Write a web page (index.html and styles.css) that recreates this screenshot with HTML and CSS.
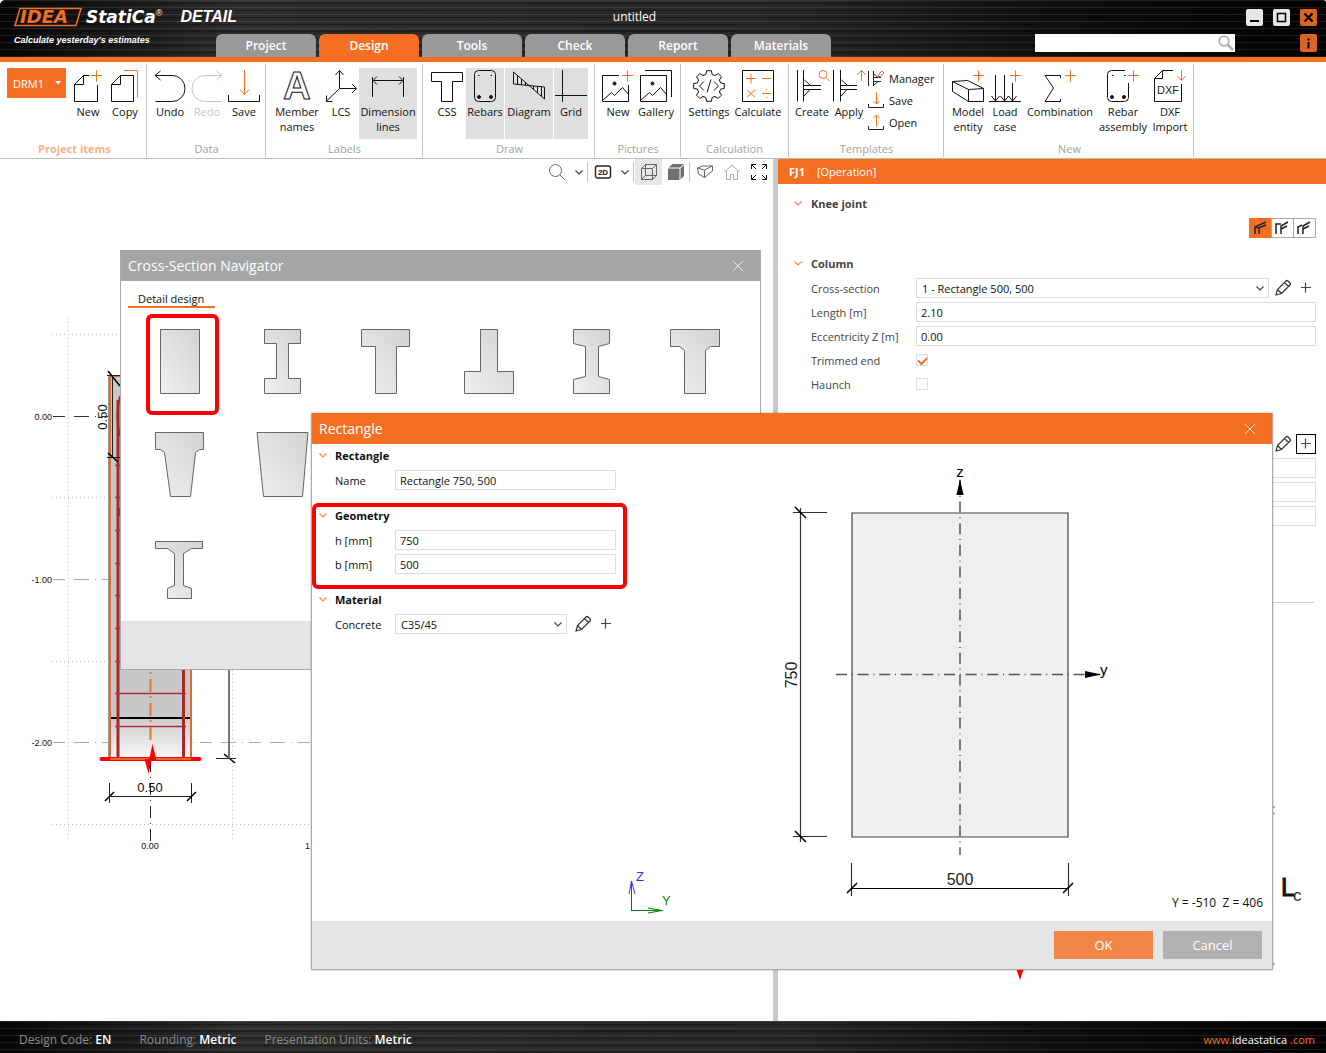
FILE: index.html
```html
<!DOCTYPE html>
<html lang="en">
<head>
<meta charset="utf-8">
<title>IDEA StatiCa Detail - untitled</title>
<link rel="stylesheet" href="styles.css">
</head>
<body>
<svg class="defs" width="0" height="0" aria-hidden="true">
  <defs>
    <linearGradient id="metal" x1="0" y1="1" x2="1" y2="0"><stop offset="0" stop-color="#f0f0f0"/><stop offset="1" stop-color="#d2d2d2"/></linearGradient>
    <symbol id="chev" viewBox="0 0 10 10"><path d="M1.500 3.500L5 7l3.500-3.500" fill="none" stroke="currentColor" stroke-width="1.200"/></symbol>
    <symbol id="pencil" viewBox="0 0 18 18"><path d="M2 16l1.500-5.500L12 2q1-1 2 0l2 2q1 1 0 2L7.500 14.500zM10.500 3.500l4 4M3.500 10.500l4 4" fill="none" stroke="#333" stroke-width="1.200"/></symbol>
    <symbol id="plus" viewBox="0 0 20 20"><path d="M5 9.500h10M9.500 4.500v10" fill="none" stroke="#444" stroke-width="1.200"/></symbol>
    <symbol id="cross" viewBox="0 0 12 12"><path d="M1 1l10 10M11 1L1 11" fill="none" stroke="#fff" stroke-opacity=".8"/></symbol>
  </defs>
</svg>

<div class="app">
  <header class="top">
    <div class="brand">
      <div class="brand-row">
        <svg class="logo" width="68" height="20" role="img" aria-label="IDEA">
          <path d="M6 1.500H67L62 18.500H1z" fill="none" stroke="#f36f21" stroke-width="1.500"/>
          <text x="6" y="16" class="logo-text">IDEA</text>
        </svg>
        <span class="statica">StatiCa<sup>®</sup></span>
        <span class="detail">DETAIL</span>
      </div>
      <p class="tagline">Calculate yesterday's estimates</p>
    </div>
    <div class="top-mid">
      <div class="doc-title">untitled</div>
      <nav class="tabs">
        <button>Project</button><button class="on">Design</button><button>Tools</button><button>Check</button><button>Report</button><button>Materials</button>
      </nav>
    </div>
    <div class="top-right">
      <div class="win">
        <button aria-label="Minimize"><svg width="17" height="17"><path d="M4 12h9" stroke="#000" stroke-width="2"/></svg></button>
        <button aria-label="Maximize"><svg width="17" height="17"><path d="M4.500 4.500h8v8h-8z" fill="none" stroke="#000" stroke-width="1.500"/></svg></button>
        <button class="hot" aria-label="Close"><svg width="17" height="17"><path d="M4.500 4.500l8 8M12.500 4.500l-8 8" stroke="#000" stroke-width="2.200"/></svg></button>
      </div>
      <div class="find">
        <label class="search"><input type="text" aria-label="Search"><svg width="18" height="18"><circle cx="7" cy="7" r="4.800" fill="none" stroke="#b0b0b0" stroke-width="1.800"/><path d="M10.500 10.500l5.500 5.500" stroke="#b0b0b0" stroke-width="2.500"/></svg></label>
        <div class="win"><button class="hot" aria-label="Info"><svg width="17" height="17"><path d="M8.500 7v6.500M8.500 3.500v2" stroke="#000" stroke-width="2"/></svg></button></div>
      </div>
    </div>
  </header>

  <section class="ribbon">
    <div class="grp g-items">
      <div class="tools">
        <label class="drm"><select aria-label="Project item"><option>DRM1</option></select><svg width="7" height="4"><path d="M0 0h6L3 3.500z" fill="#fff"/></svg></label>
        <button class="w36"><svg class="ic"><path d="M2.500 31.500v-17L11.500 5.500h6M2.500 14.500h9v-9M25.500 15v16.500h-23"/><path class="o" d="M24.500 .5v11M19 5.500h11"/></svg>New</button>
        <button class="w36"><svg class="ic"><path d="M2.500 31.500v-17L11.500 5.500h13v26zM2.500 14.500h9v-9"/><path class="o" d="M15 .5h13.500v27"/></svg>Copy</button>
      </div>
      <h2 class="hl">Project items</h2>
    </div>
    <div class="grp g-data">
      <div class="tools">
        <button class="w36"><svg class="ic"><path d="M1 5.500h17.500a12.500 13 0 0 1 0 26H1.500M6.500 1L1 5.500 6.500 10"/></svg>Undo</button>
        <button class="w36 off" disabled><svg class="ic"><path d="M31 5.500H13.500a12.500 13 0 0 0 0 26H30.500M25.500 1L31 5.500 25.500 10"/></svg>Redo</button>
        <button class="w36"><svg class="ic"><path d="M.5 25v6.500h31V25"/><path class="o" d="M16.500 0v24M12 19.500l4.500 5 4.500-5"/></svg>Save</button>
      </div>
      <h2>Data</h2>
    </div>
    <div class="grp g-labels">
      <div class="tools">
        <button class="w52"><svg class="ic"><text x="16" y="29" text-anchor="middle" class="ic-a">A</text></svg>Member names</button>
        <button class="w34"><svg class="ic"><path d="M14.500 1v17.500L1 31.500M14.500 18.500H31M10.500 5l4-4.500 4 4.500M27 14l4.500 4.500L27 23M1.500 25.500v6h6"/></svg>LCS</button>
        <button class="w58 on"><svg class="ic"><path d="M.5 7v20M31.500 7v20M1 10.500h30M5 6.500L1 10.500l4 4M27 6.500l4 4-4 4"/></svg>Dimension lines</button>
      </div>
      <h2>Labels</h2>
    </div>
    <div class="grp g-draw">
      <div class="tools">
        <button class="w36"><svg class="ic"><path d="M.5 2.500h31v9H21.500v20h-11v-20H.5z"/></svg>CSS</button>
        <button class="w38 on"><svg class="ic"><rect x="5.500" y=".5" width="21" height="31" rx="4"/><path d="M9 5.500h1.500M21.500 5.500h1.500"/><g class="dot"><circle cx="10" cy="27" r="1.500"/><circle cx="22" cy="27" r="1.500"/></g></svg>Rebars</button>
        <button class="w48 on"><svg class="ic"><path d="M.5 2v12l31 3v12zM4.500 5v9.500M8.500 9v6M12.500 12v3.500M20.500 16v4M24.500 16.500v6.500M28.500 17v9.500"/></svg>Diagram</button>
        <button class="w34 on"><svg class="ic"><path d="M7.500 0v32M0 25.500h32"/></svg>Grid</button>
      </div>
      <h2>Draw</h2>
    </div>
    <div class="grp g-pics">
      <div class="tools">
        <button class="w36"><svg class="ic"><path d="M17 5.500H.5v26h26V15M.5 30.500l9-8 3 3 8-8 6 7"/><circle class="dot" cx="12.500" cy="13.500" r="1.500"/><path class="o" d="M25.500 .5v11M20 5.500h11"/></svg>New</button>
        <button class="w38"><svg class="ic"><path d="M.5 5.500h26v26H.5zM.5 30.500l9-8 3 3 8-8 6 7M5 .5h26.500V27"/><circle class="dot" cx="12.500" cy="13.500" r="1.500"/></svg>Gallery</button>
      </div>
      <h2>Pictures</h2>
    </div>
    <div class="grp g-calc">
      <div class="tools">
        <button class="w48"><svg class="ic"><path stroke-linejoin="round" d="M27.600 12.900L31.300 13.600V18.400L27.600 19.100 26.400 22 28.500 25.100 25.100 28.500 22 26.400 19.100 27.600 18.400 31.300H13.600L12.900 27.600 10 26.400 6.900 28.500 3.500 25.100 5.600 22 4.400 19.100 .7 18.400V13.600L4.400 12.900 5.600 10 3.500 6.900 6.900 3.500 10 5.600 12.900 4.400 13.600 .7H18.400L19.100 4.400 22 5.600 25.100 3.500 28.500 6.900 26.400 10zM11 11.500L6.500 16 11 20.500M21 11.500l4.500 4.500-4.500 4.500M18 9.500l-4 13"/></svg>Settings</button>
        <button class="w48"><svg class="ic"><path d="M.5 .5h31v31H.5z"/><path class="o" d="M4 8.500h10M9 3.500v10M20 8.500h9M5 20l8 7M13 20l-8 7M20 23.500h9M24 19.500h1M24 27.500h1"/></svg>Calculate</button>
      </div>
      <h2>Calculation</h2>
    </div>
    <div class="grp g-templ">
      <div class="tools">
        <button class="w36"><svg class="ic"><path d="M1.500 0v31.500M7.500 0v31.500M8 15.500h17M8 19.500h17M8.500 10l6 5.500M8 26l6-6.500"/><circle class="o" cx="27" cy="4.500" r="4"/><path class="o" d="M30 7.500l3.500 3.500"/></svg>Create</button>
        <button class="w36"><svg class="ic"><path d="M.5 0v31.500M7.500 0v31.500M8 15.500h16M8 19.500h16M8.500 10l6 5.500M8 26l6-6.500"/><path class="o" d="M28.500 11V.5M24 5l4.500-4.500L33 5"/></svg>Apply</button>
        <div class="stack">
          <button><svg class="sm"><path d="M.5 1v15M5.500 1v15M6 7.500h7M6 11.500h7M6 4l4 3.500M6 15l4-3.500"/><path class="o" d="M10 7l1-3 3-3 2 2-3 3z"/></svg>Manager</button>
          <button><svg class="sm"><path d="M.5 12v3.500h15V12"/><path class="o" d="M8.500 0v12M5.500 9l3 3 3-3"/></svg>Save</button>
          <button><svg class="sm"><path d="M.5 12v3.500h15V12"/><path class="o" d="M8.500 12.500V1M5.500 4l3-3 3 3"/></svg>Open</button>
        </div>
      </div>
      <h2>Templates</h2>
    </div>
    <div class="grp g-new">
      <div class="tools">
        <button class="w36"><svg class="ic"><path d="M.5 11.500l16 8v12l-16-10zM.5 11.500l15-1 16 8-15 1M31.500 18.500v13h-15"/><path class="o" d="M26.500 .5v11M21 5.500h11"/></svg>Model entity</button>
        <button class="w36"><svg class="ic"><path d="M0 31.500h32M6.500 5v26M15.500 5v26M23.500 13v18M2.500 26l4 5 4-5M11.500 26l4 5 4-5M19.500 26l4 5 4-5"/><path class="o" d="M26.500 .5v11M21 5.500h11"/></svg>Load case</button>
        <button class="w72"><svg class="ic"><path d="M16.500 8V5.500H1l8.500 12.500L1 31.500h15.500V29"/><path class="o" d="M26.500 .5v11M21 5.500h11"/></svg>Combination</button>
        <button class="w52"><svg class="ic"><path d="M18 .5H4.500q-4 0-4 4v23q0 4 4 4h13q4 0 4-4V13M5 5.500h1.500M17 5.500h1.500"/><g class="dot"><circle cx="5" cy="27" r="1.500"/><circle cx="17" cy="27" r="1.500"/></g><path class="o" d="M26.500 .5v11M21 5.500h11"/></svg>Rebar assembly</button>
        <button class="w40"><svg class="ic"><path d="M19 .5H8.500L.5 8.500v23h27V14M.5 8.500h8v-8"/><text class="ic-dxf" x="3" y="24">DXF</text><path class="o" d="M27.500 0v10M23.500 6l4 4.500 4-4.500"/></svg>DXF Import</button>
      </div>
      <h2>New</h2>
    </div>
  </section>

  <main class="work">
    <section class="view">
      <div class="viewbar">
        <button aria-label="Zoom"><svg width="18" height="18"><circle cx="7.500" cy="7.500" r="6"/><path d="M12 12l5 5"/></svg></button>
        <button class="tiny" aria-label="Zoom options"><svg width="10" height="10"><use href="#chev"/></svg></button>
        <i class="sep"></i>
        <button aria-label="2D view"><svg width="18" height="18"><rect x="1.500" y="3" width="15" height="12" rx="2" stroke="#222" stroke-width="1.400"/><text x="9" y="12" text-anchor="middle" class="ic-2d">2D</text></svg></button>
        <button class="tiny" aria-label="View options"><svg width="10" height="10"><use href="#chev"/></svg></button>
        <i class="sep"></i>
        <button class="on" aria-label="Wireframe"><svg width="18" height="18"><path d="M1.500 5.500h11v11h-11zM5.500 1.500h11v11h-11zM1.500 5.500l4-4M12.500 5.500l4-4M1.500 16.500l4-4M12.500 16.500l4-4"/></svg></button>
        <button aria-label="Solid"><svg width="18" height="18"><path d="M1 5.500h11.500V17H1zM1.500 4.500l4-3.500H17l-4 3.500zM13.500 5.500L17 2v11l-3.500 3.500z" fill="#707070" stroke="none"/></svg></button>
        <i class="sep"></i>
        <button aria-label="Perspective"><svg width="18" height="18"><path d="M1.500 5l5-2h10v5l-8 6.500-6-3.500zM1.500 5l7 2v7.500M8.500 7l8-4"/></svg></button>
        <button class="soft" aria-label="Home view"><svg width="18" height="18"><path d="M1.500 9L9 2l7.500 7M3.500 8v8.500h4v-5h3v5h4V8"/></svg></button>
        <button aria-label="Full screen"><svg width="18" height="18" class="blk"><path d="M6 1.500H1.500V6M2 2l4 4M12 1.500h4.500V6M16 2l-4 4M6 16.500H1.500V12M2 16l4-4M12 16.500h4.500V12M16 16l-4-4"/></svg></button>
      </div>
      <svg class="model" role="img" aria-label="Column model">
        <defs><linearGradient id="fade" x1="0" y1="0" x2="0" y2="1"><stop offset="0" stop-color="#ccc"/><stop offset="1" stop-color="#f8f8f8"/></linearGradient></defs>
        <g transform="translate(0 -185)" fill="none">
          <path d="M68.500 318v524M232.500 318v524M52 334.500h260M52 497.500h260M52 661.500h260M52 824.500h260" stroke="#bbb" stroke-dasharray="1 3"/>
          <path d="M53 416.500h58" stroke="#333" stroke-dasharray="12 9 15 6 1 6"/>
          <path d="M53 579.500h58M53 742.500h259" stroke="#aaa" stroke-dasharray="12 9 15 6 1 6"/>
          <path d="M109 376h83v342h-83z" fill="#c8c8c8"/><path d="M109 718h83v41h-83z" fill="url(#fade)"/>
          <path d="M110 718h82" stroke="#000" stroke-width="2"/>
          <path d="M118 400v358M183.500 400v358" stroke="#a32a2a" stroke-width="3"/>
          <path d="M120 396q-5 20 0 40M120 508v8" stroke="#a32a2a" stroke-width="2"/>
          <path d="M115 693.500h71M115 726.500h71M115 465.500h6M115 497.500h6M115 530.500h6M115 563.500h6M115 595.500h6M115 628.500h6M115 661.500h6" stroke="#b0303a" stroke-width="1.500"/>
          <path d="M110 376v383M191 376v383M110 376h81" stroke="#e06a2b" stroke-width="2"/><path d="M108.500 376v383" stroke="#999"/>
          <path d="M150.500 672v68" stroke="#f37021" stroke-width="2" stroke-dasharray="2 5 13 4"/>
          <path d="M150.500 760v82" stroke="#222" stroke-dasharray="12 5 1 5"/>
          <path d="M101.500 759h98" stroke="#f00" stroke-width="4" stroke-linecap="round"/>
          <path d="M110 759h81" stroke="#e06a2b" stroke-width="2"/>
          <path d="M149 760l3.500-16 4 16zM144.500 759h7.500l-3.500 15z" fill="#f00"/>
          <path d="M109.500 783v20M191.500 783v20M109 796.500h83M112.500 376v82M107 375.500h14M107 457.500h14" stroke="#222"/>
          <path d="M105 801l9-9M187 801l9-9M108 371l12 15M108 453l10 9M224 754l11 9" stroke="#000" stroke-width="1.500"/>
          <path d="M229 670v88" stroke="#777" stroke-width="2"/><path d="M216 758.500h20" stroke="#222"/>
          <g class="axis"><text x="52" y="420" text-anchor="end">0.00</text><text x="52" y="583" text-anchor="end">-1.00</text><text x="52" y="746" text-anchor="end">-2.00</text><text x="150" y="849" text-anchor="middle">0.00</text><text x="305" y="849">1</text></g>
          <g class="dimtxt"><text x="150" y="792" text-anchor="middle">0.50</text><text transform="translate(107 417) rotate(-90)" text-anchor="middle">0.50</text></g>
        </g>
      </svg>
    </section>
    <div class="splitter"></div>
    <aside class="props">
      <h2 class="props-head"><b>FJ1</b><span>[Operation]</span></h2>
      <div class="props-body">
        <h3><svg width="10" height="10"><use href="#chev"/></svg>Knee joint</h3>
        <div class="kinds">
          <button class="on" aria-label="Joint type 1"><svg width="20" height="18"><path d="M5 15V8l11-5M9 15V9M5 8l4 1 7-3"/></svg></button>
          <button aria-label="Joint type 2"><svg width="20" height="18"><path d="M4 15V5h5M9 15V7l7-4M9 10l6-3"/></svg></button>
          <button aria-label="Joint type 3"><svg width="20" height="18"><path d="M4 15V8l4-2M9 15V7l7-4M9 10l6-3"/></svg></button>
        </div>
        <h3><svg width="10" height="10"><use href="#chev"/></svg>Column</h3>
        <div class="row"><label for="cs">Cross-section</label><span class="combo"><select id="cs"><option>1 - Rectangle 500, 500</option></select><svg width="10" height="10"><use href="#chev"/></svg></span>
          <span class="acts"><button aria-label="Edit"><svg width="18" height="18"><use href="#pencil"/></svg></button><button aria-label="Add"><svg width="20" height="20"><use href="#plus"/></svg></button></span></div>
        <div class="row"><label for="len">Length [m]</label><input id="len" class="wide" type="text" value="2.10"></div>
        <div class="row"><label for="ecc">Eccentricity Z [m]</label><input id="ecc" class="wide" type="text" value="0.00"></div>
        <div class="row"><label for="trim">Trimmed end</label><input id="trim" type="checkbox" checked></div>
        <div class="row"><label for="haunch">Haunch</label><input id="haunch" type="checkbox"></div>
        <div class="beam">
          <div class="row"><span></span><span class="combo"><select aria-label="Cross-section"></select></span>
            <span class="acts"><button aria-label="Edit"><svg width="18" height="18"><use href="#pencil"/></svg></button><button class="boxed" aria-label="Add"><svg width="20" height="20"><use href="#plus"/></svg></button></span></div>
          <div class="row"><span></span><input class="wide" type="text" aria-label="Length"></div>
          <div class="row"><span></span><input class="wide" type="text" aria-label="Eccentricity"></div>
          <div class="row"><span></span><input class="wide" type="text" aria-label="Rotation"></div>
        </div>
      </div>
      <svg class="sketch" role="img" aria-label="Joint sketch">
        <path d="M494 204h3M494 361h3M494 209l3 2" stroke="#777"/>
        <path d="M238 365h8l-4 12z" fill="#f00"/>
        <text x="503" y="293" class="lc">L</text><text x="515" y="298" class="lc-sub">c</text>
      </svg>
    </aside>

    <section class="navigator" aria-label="Cross-Section Navigator">
      <header class="dlg-head">Cross-Section Navigator<button aria-label="Close"><svg width="12" height="12"><use href="#cross"/></svg></button></header>
      <div class="nav-body">
        <button class="nav-tab">Detail design</button>
        <div class="shapes">
          <button aria-label="Rectangle"><svg><path d="M32.500 19.500h39v64h-39z"/></svg></button>
          <button aria-label="I section"><svg><path d="M33.500 19.500h36v14h-12v35h12v15h-36v-15h12v-35h-12z"/></svg></button>
          <button aria-label="T section"><svg><path d="M27.500 19.500h48v17H62.500v47h-21v-47h-14z"/></svg></button>
          <button aria-label="Inverted T section"><svg><path d="M43.500 19.500h17v42h16v22h-49v-22h16z"/></svg></button>
          <button aria-label="Haunched I section"><svg><path d="M33.500 19.500h36v14l-11 3v30l11 3v14h-36v-14l12-3v-30l-12-3z"/></svg></button>
          <button aria-label="Haunched T section"><svg><path d="M27.500 19.500h49v17h-9l-5 4v43h-21v-43l-5-4h-9z"/></svg></button>
          <button aria-label="Tapered T section"><svg><path d="M27.500 19.500h48v17h-4l-4 3-5 44h-20l-6-44-4-3h-5z"/></svg></button>
          <button aria-label="Trapezoid"><svg><path d="M26 19.500h51l-5.500 64h-39z"/></svg></button>
          <span></span><span></span><span></span><span></span>
          <button aria-label="Asymmetric I section"><svg><path d="M27.500 25.500h47v7h-11l-8 5v32l8 3v10h-24v-10l7-3v-32l-7-5h-12z"/></svg></button>
        </div>
      </div>
      <footer class="nav-foot"></footer>
      <i class="mark mark-shape"></i>
    </section>

    <section class="dialog" aria-label="Rectangle">
      <header class="dlg-head">Rectangle<button aria-label="Close"><svg width="12" height="12"><use href="#cross"/></svg></button></header>
      <div class="dlg-main">
        <form class="dlg-form">
          <h3><svg width="10" height="10"><use href="#chev"/></svg>Rectangle</h3>
          <div class="row"><label for="nm">Name</label><input id="nm" class="wide" type="text" value="Rectangle 750, 500"></div>
          <h3><svg width="10" height="10"><use href="#chev"/></svg>Geometry</h3>
          <div class="row"><label for="gh">h [mm]</label><input id="gh" class="wide" type="text" value="750"></div>
          <div class="row"><label for="gb">b [mm]</label><input id="gb" class="wide" type="text" value="500"></div>
          <h3><svg width="10" height="10"><use href="#chev"/></svg>Material</h3>
          <div class="row"><label for="mat">Concrete</label><span class="combo"><select id="mat"><option>C35/45</option></select><svg width="10" height="10"><use href="#chev"/></svg></span>
            <span class="acts"><button type="button" aria-label="Edit"><svg width="18" height="18"><use href="#pencil"/></svg></button><button type="button" aria-label="Add"><svg width="20" height="20"><use href="#plus"/></svg></button></span></div>
        </form>
        <svg class="section-view" role="img" aria-label="Section with dimensions">
          <g transform="translate(-627 -444)" fill="none" stroke="#333">
            <path d="M852 513h216v324H852z" fill="#efefef" stroke="#444" stroke-width="1.200"/>
            <path d="M960 480v375M836 674.500h264" stroke="#555" stroke-width="1.500" stroke-dasharray="11 4.800 1 4.800"/>
            <path d="M960 479l-3.500 16h7zM1101 674.500l-16-3.500v7z" fill="#000" stroke="none"/>
            <path d="M800.500 508v334M793 512.500h34M793 836.500h34M851.500 863v33M1068.500 863v33" stroke-width="1.200"/>
            <path d="M851 888.500h218" stroke="#000"/>
            <path d="M795 507l11 11M795 831l11 11M847 893l10-10M1063 893l10-10" stroke="#000" stroke-width="1.500"/>
            <path d="M631.500 911v-30M629 894l2.500-13 3.500 13" stroke="#33e"/>
            <path d="M631 910.500h32M648 908l14 2.500-14 2.500" stroke="#080"/>
          </g>
          <g transform="translate(-627 -444)">
            <g class="axtxt"><text x="960" y="477" text-anchor="middle">z</text><text x="1100" y="675">y</text></g>
            <g class="bigdim"><text x="960" y="885" text-anchor="middle">500</text><text transform="translate(797 675) rotate(-90)" text-anchor="middle">750</text></g>
            <g class="ucs"><text x="636" y="881" fill="#33e">Z</text><text x="662" y="905" fill="#080">Y</text></g>
            <text class="pos" x="1263" y="907" text-anchor="end" xml:space="preserve">Y = -510  Z = 406</text>
          </g>
        </svg>
      </div>
      <footer class="dlg-foot"><button class="ok">OK</button><button>Cancel</button></footer>
      <i class="mark mark-geo"></i>
    </section>
  </main>

  <footer class="status">
    <span>Design Code: <b>EN</b></span><span>Rounding: <b>Metric</b></span><span>Presentation Units: <b>Metric</b></span>
    <a href="#">www.<em>ideastatica</em> .com</a>
  </footer>
</div>
</body>
</html>
```
FILE: styles.css
```css
:root {
  --orange: #f46f22;
  --metal:
    repeating-linear-gradient(180deg, rgba(255,255,255,.09) 0 1px, transparent 1px 3px, rgba(0,0,0,.35) 3px 4px, transparent 4px 7px),
    linear-gradient(90deg, #060606 0, #2c2c2c 18%, #262626 60%, #101010 78%, #020202 100%);
}
* { box-sizing: border-box; }
body { margin: 0; background: #fff; font: 11px/15px "Open Sans", "Noto Sans", sans-serif; color: #111; }
button, input, select { font: inherit; color: inherit; margin: 0; padding: 0; border: 0; background: none; border-radius: 0; }
h2, h3, p { margin: 0; font-size: 11px; }
svg { display: block; flex: none; }
.defs { position: absolute; }
.app { display: flex; flex-direction: column; min-height: 100vh; }

/* title bar */
.top { display: grid; grid-template-columns: 216px 1fr 291px; height: 62px; background: var(--metal); border-bottom: 5px solid var(--orange); border-top-left-radius: 5px; border-top-right-radius: 3px; }
.brand { padding: 7px 0 0 14px; color: #fff; white-space: nowrap; }
.brand-row { display: flex; align-items: center; height: 20px; gap: 4px; }
.logo { overflow: visible; }
.logo-text { font: italic bold 18px "DejaVu Sans", sans-serif; fill: var(--orange); }
.statica { font: italic bold 17px/20px "DejaVu Sans", sans-serif; }
.statica sup { font: 9px/8px "Liberation Sans", sans-serif; vertical-align: 7px; }
.detail { font: italic bold 16px/20px "Liberation Sans", sans-serif; padding-left: 14px; }
.tagline { font: italic bold 9px/12px "Liberation Sans", sans-serif; padding-top: 7px; }
.top-mid { display: flex; flex-direction: column; justify-content: space-between; }
.doc-title { color: #fff; font-size: 12px; line-height: 34px; text-align: center; padding-left: 18px; }
.tabs { display: flex; gap: 3px; }
.tabs button { width: 100px; height: 23px; border-radius: 6px 6px 0 0; background: #999; color: #fff; font-weight: 600; font-size: 12px; }
.tabs .on { background: var(--orange); }
.top-right { display: flex; flex-direction: column; padding: 9px 9px 0 0; gap: 8px; }
.win { display: flex; justify-content: flex-end; gap: 10px; }
.win button { background: #e6e6e6; border-radius: 2px; }
.win .hot { background: #dd6320; }
.find { display: flex; justify-content: space-between; }
.search { display: grid; width: 200px; height: 18px; background: #fff; }
.search > * { grid-area: 1 / 1; }
.search input { width: 100%; }
.search svg { justify-self: end; }

/* ribbon */
.ribbon { display: flex; height: 97px; border-bottom: 1px solid #bbb; padding-top: 2px; overflow: hidden; }
.grp { display: flex; flex-direction: column; justify-content: space-between; border-right: 1px solid #c4c4c4; padding: 4px 0 0 5px; height: 93px; flex: none; }
.grp h2 { font-weight: 400; color: #a2a2a2; text-align: center; line-height: 16px; padding-right: 4px; }
.grp .hl { color: #f8b28a; font-weight: 700; }
.g-items { width: 147px; padding-left: 7px; }
.g-data { width: 119px; }
.g-labels { width: 157px; }
.g-draw { width: 172px; padding-left: 6px; }
.g-pics { width: 86px; }
.g-calc { width: 108px; padding-left: 4px; }
.g-templ { width: 155px; }
.g-new { width: 250px; padding-left: 6px; }
.tools { display: flex; gap: 1px; align-items: flex-start; height: 72px; }
.tools button { display: flex; flex-direction: column; align-items: center; gap: 2px; height: 71px; padding-top: 2px; line-height: 15px; text-align: center; flex: none; }
.tools button.on { background: #dfdfdf; }
.tools button.off { color: #c4c4c4; }
.w34 { width: 34px; }
.w36 { width: 36px; }
.w38 { width: 38px; }
.w40 { width: 40px; }
.w48 { width: 48px; }
.w52 { width: 52px; }
.w58 { width: 58px; }
.w72 { width: 72px; }
.ic { width: 32px; height: 32px; overflow: visible; fill: none; stroke: currentColor; }
.sm { width: 16px; height: 17px; overflow: visible; fill: none; stroke: #222; }
.o { stroke: var(--orange); }
.dot { fill: #111; }
.ic-a { font: bold 38px "Liberation Sans", sans-serif; }
.ic-dxf { font: 11px "Liberation Sans", sans-serif; fill: #222; stroke: none; }
.drm { display: grid; width: 59px; height: 30px; margin-right: 3px; background: var(--orange); color: #fff; flex: none; }
.drm > * { grid-area: 1 / 1; }
.drm select { appearance: none; padding: 0 0 0 6px; width: 100%; color: #fff; }
.drm svg { place-self: center end; margin-right: 4px; }
.stack { display: flex; flex-direction: column; width: 72px; gap: 5px; padding-top: 2px; }
.tools .stack button { flex-direction: row; height: 17px; gap: 5px; padding: 0; }

/* workspace */
.work { flex: 1; position: relative; display: grid; grid-template-columns: minmax(0, 773fr) 5px minmax(0, 548fr); }
.view { display: flex; flex-direction: column; }
.viewbar { display: flex; justify-content: flex-end; align-items: center; height: 26px; padding-right: 1px; }
.viewbar button { display: grid; place-items: center; width: 27px; height: 26px; }
.viewbar .tiny { width: 17px; color: #444; }
.viewbar svg { fill: none; stroke: #666; stroke-width: 1; }
.viewbar .soft svg { stroke: #aaa; }
.viewbar .blk { stroke: #111; }
.viewbar .on { background: #e6e6e6; }
.sep { width: 1px; height: 20px; margin-right: 1px; background: #c4c4c4; }
.ic-2d { font: bold 8px "Liberation Sans", sans-serif; fill: #111; stroke: none; }
.model, .sketch { flex: 1; width: 100%; min-height: 0; }
.axis { font: 9px "Liberation Sans", sans-serif; fill: #111; }
.dimtxt { font: 13px "Liberation Sans", sans-serif; fill: #111; }
.splitter { background: #c8c8c8; }

/* property panel */
.props { display: flex; flex-direction: column; }
.props-head { display: flex; gap: 12px; align-items: center; height: 25px; padding-left: 11px; background: var(--orange); color: #fff; font-weight: 400; }
.props-body { padding: 8px 10px 0 15px; color: #444; }
h3 { display: flex; align-items: center; gap: 8px; height: 24px; padding-bottom: 2px; font-weight: 700; }
h3 svg { color: #f58748; }
.kinds { display: flex; justify-content: flex-end; padding: 2px 0 14px; }
.kinds button { border: 1px solid #aaa; margin-left: -1px; width: 23px; }
.kinds .on { background: var(--orange); border-color: var(--orange); }
.kinds svg { fill: none; stroke: #222; stroke-width: 1.5; }
.row { display: grid; grid-template-columns: 105px 1fr auto; align-items: center; height: 24px; padding-left: 18px; }
.row .wide { grid-column: 2 / -1; height: 20px; width: 100%; border: 1px solid #ddd; padding: 0 4px; color: #111; background: #fff; }
.combo { display: grid; }
.combo > * { grid-area: 1 / 1; }
.combo select { appearance: none; height: 20px; width: 100%; border: 1px solid #ddd; padding: 0 5px; color: #111; background: #fff; }
.combo svg { place-self: center end; margin-right: 4px; color: #444; }
.acts { display: flex; align-items: center; gap: 4px; padding-left: 5px; }
.boxed { outline: 1px solid #000; outline-offset: -1px; }
input[type="checkbox"] { appearance: none; width: 12px; height: 12px; border: 1px solid #ddd; display: grid; justify-items: center; padding-top: 2px; }
input[type="checkbox"]:checked::before { content: ""; width: 7px; height: 4px; border: solid var(--orange); border-width: 0 0 2px 2px; transform: rotate(-45deg); }
.beam { margin-top: 36px; }
.beam::after { content: ""; display: block; margin: 74px 2px 0 0; border-top: 1px solid #ccc; }
.lc { font: 25px "Liberation Sans", sans-serif; fill: #111; stroke: #111; }
.lc-sub { font: 17px "Liberation Sans", sans-serif; fill: #333; }

/* windows */
.dlg-head { display: flex; align-items: center; justify-content: space-between; height: 31px; padding: 0 16px 0 7px; font-size: 14px; color: #fff; }
.navigator { position: absolute; left: 120px; top: 91px; width: 641px; background: #fff; border: 1px solid #aaa; border-top: 0; }
.navigator .dlg-head { background: #a5a5a5; }
.nav-body { padding: 9px 7px 0; height: 340px; }
.nav-tab { display: block; height: 18px; padding: 0 11px 0 10px; border-bottom: 2px solid var(--orange); color: #111; }
.shapes { display: grid; grid-template-columns: repeat(6, 103px); grid-auto-rows: 103px; padding-top: 2px; }
.shapes svg { width: 103px; height: 103px; fill: url(#metal); stroke: #666; }
.nav-foot { height: 48px; background: #e5e5e5; }
.mark { position: absolute; border: 4px solid #f00; border-radius: 6px; pointer-events: none; }
.mark-shape { left: 25px; top: 64px; width: 73px; height: 101px; }

.dialog { position: absolute; left: 311px; top: 254px; width: 962px; background: #fff; border: 1px solid #aaa; border-top: 0; box-shadow: 0 0 2px rgba(0,0,0,.3); }
.dialog .dlg-head { background: var(--orange); }
.dlg-main { display: flex; height: 477px; }
.dlg-form { width: 315px; padding: 0 11px 0 6px; }
.dlg-form h3:not(:first-child) { margin-top: 12px; }
.dlg-form h3 { gap: 7px; }
.dlg-form .row { grid-template-columns: 60px 1fr auto; padding-left: 17px; }
.dlg-form .combo { width: 172px; }
.section-view { flex: 1; height: 100%; }
.axtxt { font: 15px "Liberation Sans", sans-serif; }
.bigdim { font: 16px "Liberation Sans", sans-serif; fill: #222; }
.ucs { font: 13px "Liberation Sans", sans-serif; }
.pos { font-size: 12px; fill: #111; }
.dlg-foot { display: flex; justify-content: flex-end; gap: 10px; height: 48px; padding: 10px; background: #e5e5e5; }
.dlg-foot button { width: 99px; height: 28px; background: #b1b1b1; color: #fff; font-size: 13px; }
.dlg-foot .ok { background: #f28648; }
.mark-geo { left: 0; top: 90px; width: 315px; height: 86px; }

/* status bar */
.status { display: flex; align-items: center; gap: 28px; height: 32px; padding: 4px 11px 0 19px; background: var(--metal); color: #8c8c8c; font-size: 12px; }
.status b { color: #fff; font-weight: 600; }
.status a { margin-left: auto; color: var(--orange); text-decoration: none; font-size: 11px; }
.status em { color: #fff; font-style: normal; }
```
